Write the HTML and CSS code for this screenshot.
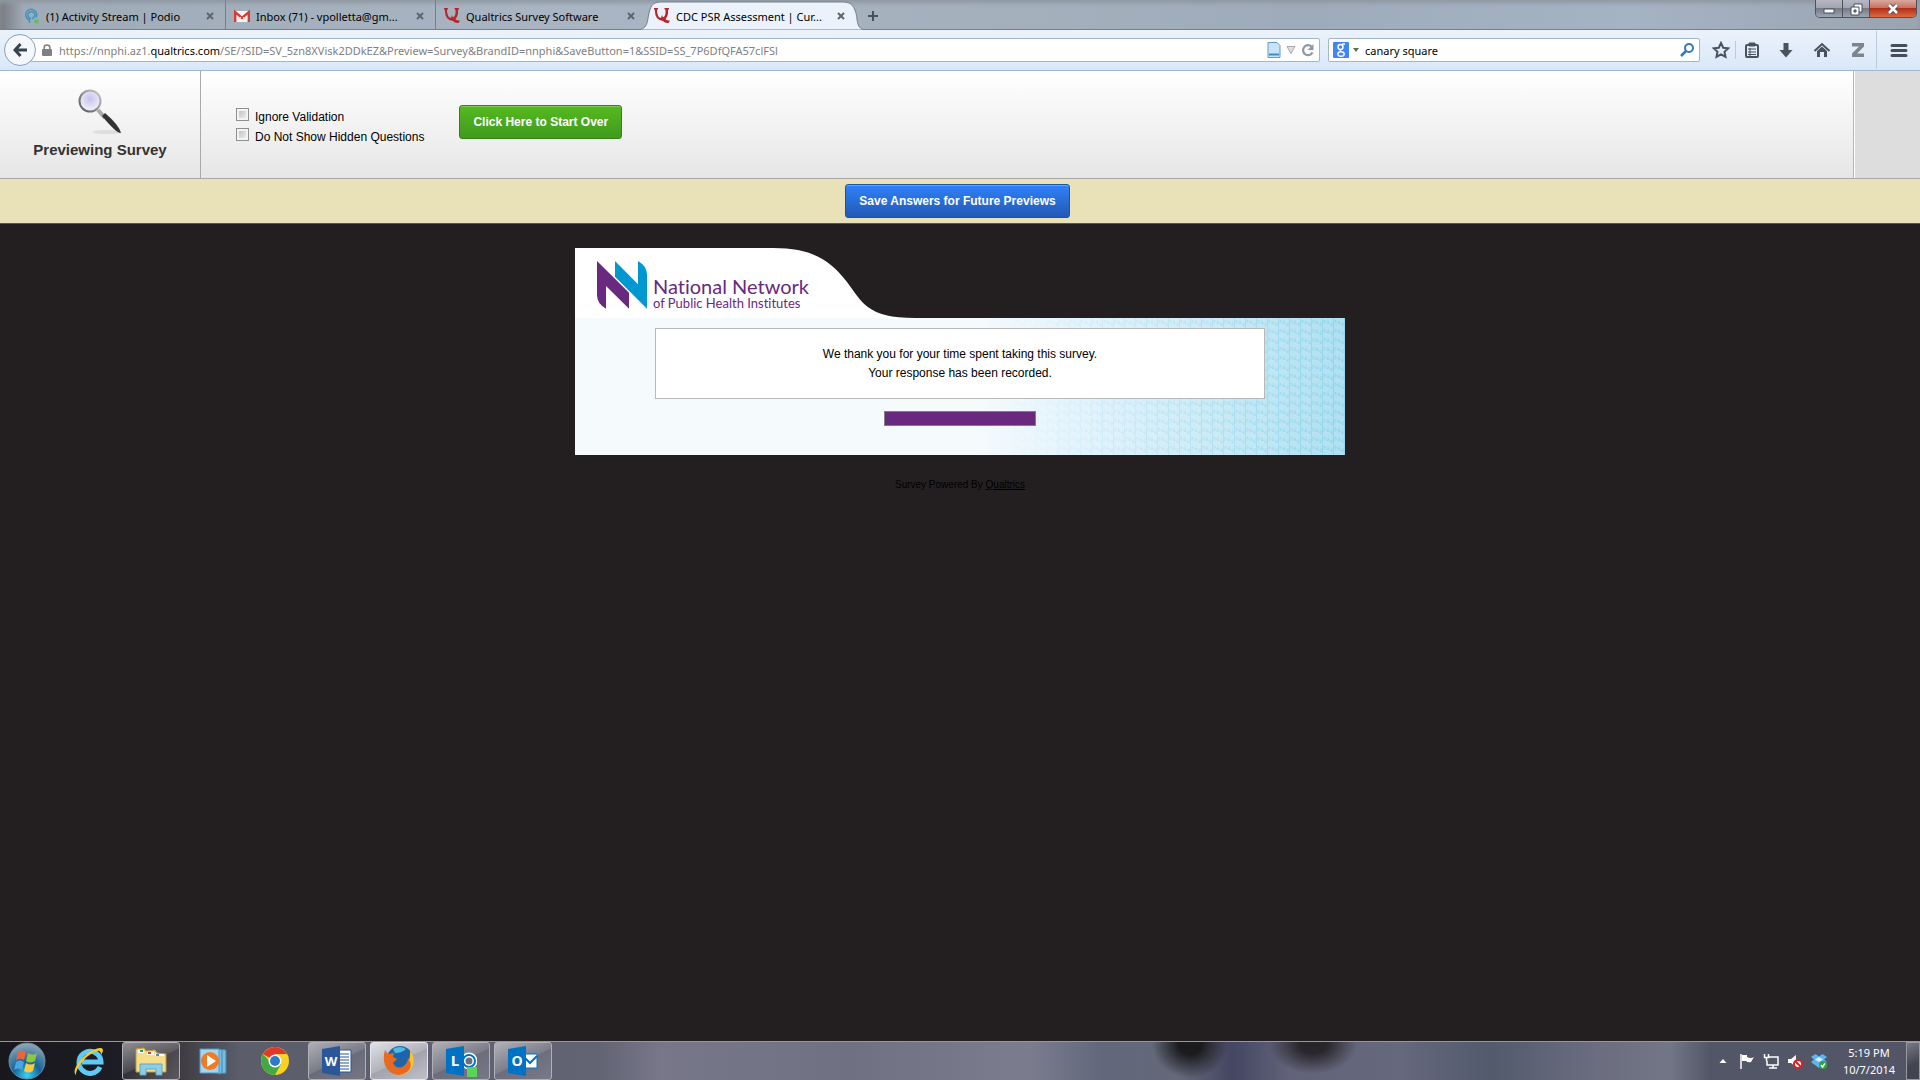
FILE: index.html
```html
<!DOCTYPE html>
<html lang="en">
<head>
    <meta charset="UTF-8">
    <meta name="viewport" content="width=device-width, initial-scale=1.0">
    <title>CDC PSR Assessment</title>
    <link rel="stylesheet" href="styles.css">
</head>
<body>
    <!-- Tab strip -->
    <header class="tab-strip">
        <nav class="tabs">
            <div class="tab">
                <svg class="icon" viewBox="0 0 16 16"><path d="M5.500 15V12A5.500 5.500 0 1 1 12 9.500M7 10.500A3.500 3.500 0 1 1 10.500 8.500L8 11" fill="none" stroke="#3f93bd" stroke-width="1.500"/><circle cx="12.500" cy="13.500" r="2.300" fill="#55c84e"/></svg>
                <a href="#">(1) Activity Stream | Podio</a>
                <button class="tab-close" aria-label="Close tab"><svg viewBox="0 0 8 8"><path d="M1 1l6 6M7 1L1 7"/></svg></button>
            </div>
            <div class="tab">
                <svg class="icon" viewBox="0 0 16 16"><path d="M0 3h16v11H0z" fill="#f6f3f3"/><path d="M1.200 14V4.200L8 10l6.800-5.800V14" fill="none" stroke="#d83a35" stroke-width="2.400"/><path d="M3 13l4-4M13 13L9 9" stroke="#ddd"/></svg>
                <a href="#">Inbox (71) - vpolletta@gm...</a>
                <button class="tab-close" aria-label="Close tab"><svg viewBox="0 0 8 8"><path d="M1 1l6 6M7 1L1 7"/></svg></button>
            </div>
            <div class="tab">
                <svg class="icon" viewBox="0 0 16 16"><path d="M0 0H4V1L3 2Q3 9 7 10L8 7L9 9.500Q12 8 11.500 2L10.500 1V0H15V1L14 2Q14.500 8 11.500 11Q13 13 16 12.500L14.500 15Q11 15.500 9 13Q1 12.500 .8 2L0 1z" fill="#b3262b"/></svg>
                <a href="#">Qualtrics Survey Software</a>
                <button class="tab-close" aria-label="Close tab"><svg viewBox="0 0 8 8"><path d="M1 1l6 6M7 1L1 7"/></svg></button>
            </div>
            <div class="tab tab-active">
                <svg class="tab-shape" viewBox="0 0 232 30" preserveAspectRatio="none"><path d="M0 30C12 30 11 22 13 13C15 4 18 2 26 2H206C214 2 217 4 220 13C222 22 220 30 232 30z" fill="#ebf2fb" stroke="#73808d"/></svg>
                <svg class="icon" viewBox="0 0 16 16"><path d="M0 0H4V1L3 2Q3 9 7 10L8 7L9 9.500Q12 8 11.500 2L10.500 1V0H15V1L14 2Q14.500 8 11.500 11Q13 13 16 12.500L14.500 15Q11 15.500 9 13Q1 12.500 .8 2L0 1z" fill="#b3262b"/></svg>
                <a href="#">CDC PSR Assessment | Cur...</a>
                <button class="tab-close" aria-label="Close tab"><svg viewBox="0 0 8 8"><path d="M1 1l6 6M7 1L1 7"/></svg></button>
            </div>
            <button class="new-tab" aria-label="New tab"><svg viewBox="0 0 10 10"><path d="M5 0v10M0 5h10" stroke="#45525e" stroke-width="2"/></svg></button>
        </nav>
        <div class="window-controls">
            <button aria-label="Minimize"><svg viewBox="0 0 16 14"><rect x="3" y="7" width="10" height="4" fill="#fff" stroke="#4a4f5c"/></svg></button>
            <button aria-label="Restore"><svg viewBox="0 0 16 14"><path d="M6 2h8v8H6z" fill="#fff" stroke="#4a4f5c"/><path d="M3 5h8v8H3z" fill="#fff" stroke="#4a4f5c"/><path d="M6 8h2v2H6z" fill="#888" stroke="#4a4f5c"/></svg></button>
            <button class="close-window" aria-label="Close"><svg viewBox="0 0 16 14"><path d="M4 3l8 8M12 3l-8 8" stroke="#4a4f5c" stroke-width="4.500"/><path d="M4 3l8 8M12 3l-8 8" stroke="#fff" stroke-width="2.600"/></svg></button>
        </div>
    </header>

    <!-- Address bar -->
    <div class="toolbar">
        <button class="back" aria-label="Back"><svg viewBox="0 0 14 14"><path d="M7.500 1L2 7l5.500 6M2.500 7H14" fill="none" stroke="#39444f" stroke-width="3"/></svg></button>
        <div class="address">
            <svg class="lock" viewBox="0 0 10 12"><path d="M2.200 6V3.500a2.800 2.500 0 0 1 5.600 0V6" fill="none" stroke="#808080" stroke-width="1.600"/><rect y="5" width="10" height="7" rx="1" fill="#808080"/></svg>
            <span class="url">https://nnphi.az1.<b>qualtrics.com</b>/SE/?SID=SV_5zn8XVisk2DDkEZ&amp;Preview=Survey&amp;BrandID=nnphi&amp;SaveButton=1&amp;SSID=SS_7P6DfQFA57clFSl</span>
            <svg class="icon" viewBox="0 0 16 16"><path d="M2 .5h9l3 3v12H2z" fill="#c9e4f8" stroke="#5f9ac8"/><path d="M3 12.500h10" stroke="#3a8ccb" stroke-width="2"/></svg>
            <svg class="small" viewBox="0 0 10 10"><path d="M1 1.500h8L5 8.500z" fill="#ddd" stroke="#aaa"/></svg>
            <svg class="icon" viewBox="0 0 16 16"><path d="M12.500 10.500A5 5 0 1 1 11.500 4.500" fill="none" stroke="#8c99a6" stroke-width="2.200"/><path d="M13.500 2v6h-6z" fill="#8c99a6"/></svg>
        </div>
        <form class="search">
            <svg class="icon" viewBox="0 0 16 16"><rect width="16" height="16" rx="1" fill="#4285f4"/><circle cx="7.500" cy="5" r="2.500" fill="none" stroke="#fff" stroke-width="1.500"/><path d="M9 2h3M8 7.500Q6 9 8.500 9.700" fill="none" stroke="#fff" stroke-width="1.300"/><ellipse cx="8" cy="12" rx="3.200" ry="2.200" fill="none" stroke="#fff" stroke-width="1.400"/></svg>
            <svg class="arrow" viewBox="0 0 6 4"><path d="M0 0h6L3 4z" fill="#666"/></svg>
            <input type="text" value="canary square" aria-label="Search">
            <button type="button" aria-label="Go"><svg class="icon" viewBox="0 0 16 16"><circle cx="10" cy="6" r="4" fill="none" stroke="#337ab5" stroke-width="2"/><path d="M7 9l-5 5" stroke="#337ab5" stroke-width="2.500"/></svg></button>
        </form>
        <div class="tools">
            <button aria-label="Bookmark"><svg viewBox="0 0 18 18"><path d="M9 2l2.200 4.700 5.100.6-3.800 3.500 1 5.100L9 13.400l-4.500 2.500 1-5.100L1.700 7.300l5.100-.6z" fill="none" stroke="#49535e" stroke-width="2"/></svg></button>
            <button class="split" aria-label="Bookmarks list"><svg viewBox="0 0 18 18"><rect x="3" y="4" width="12" height="12" rx="1" fill="none" stroke="#49535e" stroke-width="2"/><path d="M6 2h6v3H6zM5 8h8M5 11h8M5 13.500h8M7 7v8" fill="#49535e" stroke="#49535e"/></svg></button>
            <button aria-label="Downloads"><svg viewBox="0 0 18 18"><path d="M6.500 2h5v7h4L9 16.500 2.500 9h4z" fill="#49535e"/></svg></button>
            <button aria-label="Home"><svg viewBox="0 0 18 18"><path d="M1.500 10L9 3l7.500 7" fill="none" stroke="#49535e" stroke-width="2"/><path d="M4 10l5-4.500L14 10v6h-3v-5H7v5H4z" fill="#49535e"/></svg></button>
            <button aria-label="Zotero"><svg viewBox="0 0 18 18"><path d="M3 2h12v3.500L8 12.500h7V16H3v-3.500L10 5.500H3z" fill="#7c858d"/></svg></button>
            <button class="split menu" aria-label="Menu"><svg viewBox="0 0 18 18"><path d="M2 4.500h14M2 9.500h14M2 14.500h14" stroke="#454f59" stroke-width="3" stroke-linecap="round"/></svg></button>
        </div>
    </div>

    <!-- Preview options -->
    <section class="preview">
        <div class="preview-title">
            <svg viewBox="0 0 44 46">
                <defs>
                    <radialGradient id="lens" cx="50%" cy="40%" r="60%"><stop offset="0" stop-color="#c6c2ec"/><stop offset="1" stop-color="#f4f3fd"/></radialGradient>
                    <linearGradient id="rim" x1="1" y1="0" x2="0" y2="1"><stop offset="0" stop-color="#ccc"/><stop offset="1" stop-color="#555"/></linearGradient>
                </defs>
                <ellipse cx="29" cy="43" rx="14" ry="2" fill="#ddd"/>
                <path d="M20 21l7 8" stroke="#aaa" stroke-width="4"/>
                <path d="M24 27l3-3Q41 36 43 44Q39 45 24 27z" fill="#333"/>
                <circle cx="12" cy="12" r="10.500" fill="url(#lens)" stroke="url(#rim)" stroke-width="2"/>
            </svg>
            <h1>Previewing Survey</h1>
        </div>
        <div class="preview-options">
            <div class="checks">
                <label><input type="checkbox">Ignore Validation</label>
                <label><input type="checkbox">Do Not Show Hidden Questions</label>
            </div>
            <button class="btn btn-green">Click Here to Start Over</button>
        </div>
        <div class="preview-side"></div>
    </section>
    <div class="save-bar">
        <button class="btn btn-blue">Save Answers for Future Previews</button>
    </div>

    <!-- Survey -->
    <main>
        <div class="survey">
            <div class="survey-header">
                <svg class="curve" viewBox="0 0 340 70"><path d="M0 0H198C240 0 256 14 272 34C287 54 292 70 340 70H0z" fill="#fff"/></svg>
                <div class="brand">
                    <svg viewBox="0 0 150 144"><path d="M0 0L96 95V143L27 75V143Q0 128 0 102z" fill="#68297f"/><path d="M54 0L123 70V0Q150 16 150 40V143L54 47z" fill="#0098d1"/></svg>
                    <p><span class="brand-name">National Network</span><span class="brand-sub">of Public Health Institutes</span></p>
                </div>
            </div>
            <div class="survey-body">
                <svg class="weave" aria-hidden="true">
                    <defs><pattern id="nn" width="11" height="9" patternUnits="userSpaceOnUse"><path d="M1 6V2l4 4V2M5 4l4 4V4M10.500 0v9" fill="none" stroke="#6cc6e6" stroke-opacity=".4"/></pattern></defs>
                    <rect width="100%" height="100%" fill="url(#nn)"/>
                </svg>
                <div class="message">We thank you for your time spent taking this survey.<br>Your response has been recorded.</div>
                <div class="progress" role="progressbar" aria-label="Survey completion" aria-valuenow="100"></div>
            </div>
        </div>
        <p class="powered">Survey Powered By <a href="#">Qualtrics</a></p>
    </main>

    <!-- Taskbar -->
    <footer class="taskbar">
        <button class="start" aria-label="Start"><svg viewBox="0 0 38 38">
            <defs><radialGradient id="orb" cx="50%" cy="90%" r="85%"><stop offset="0" stop-color="#33d5ff"/><stop offset=".45" stop-color="#15639a"/><stop offset="1" stop-color="#8aa3b3"/></radialGradient></defs>
            <circle cx="19" cy="19" r="18" fill="url(#orb)" stroke="#6d8ba0"/>
            <path d="M10 10q4-3 8 0l-2 8q-4-3-8 0z" fill="#ee6338"/><path d="M20 11q5 3 9 0l-2 8q-5 3-9 0z" fill="#8dc63f"/><path d="M8 20q4-3 8 0l-2 8q-4-3-8 0z" fill="#4aa5e0"/><path d="M18 21q4 3 9 0l-2 8q-5 3-9 0z" fill="#fdc83b"/></svg></button>
        <button class="task" aria-label="Internet Explorer"><svg viewBox="0 0 32 32"><path d="M27 22A11 11 0 1 1 28 17H9" fill="none" stroke="#5dcbf5" stroke-width="5"/><path d="M3 30C-4 24 17 2 28 3Q32 4 28 10Q28 5 24 6C14 9 3 22 3 30z" fill="#f9c930"/></svg></button>
        <button class="task task-open" aria-label="Explorer"><svg viewBox="0 0 32 32"><path d="M1 4l8-1 2 3 9-1 2 3 9 1v18H1z" fill="#f4dd8b" stroke="#bd9b45"/><path d="M3 5h6v3H3zM12 7h7v3h-7zM20 9h9v2h-9z" fill="#fff"/><path d="M5 5h3v2H5z" fill="#27a737"/><path d="M13 7h3v2h-3z" fill="#d43d32"/><path d="M21 9h3v2h-3z" fill="#3595de"/><path d="M5 30V19h22v11h-6v-6H11v6z" fill="#8fcde5" stroke="#5ba9c8"/></svg></button>
        <button class="task" aria-label="Media Player"><svg viewBox="0 0 32 32"><path d="M21 4l8 1v23l-8 1z" fill="#7cbde2" stroke="#3989b7"/><path d="M25 4v24" stroke="#3989b7"/><path d="M3 4h19v24H3z" fill="#a6d3ed" stroke="#4a9bc9"/><circle cx="13" cy="16" r="9" fill="#f27a22"/><path d="M10 10l9 6-9 6z" fill="#fff"/></svg></button>
        <button class="task" aria-label="Chrome"><svg viewBox="0 0 32 32"><circle cx="16" cy="16" r="14" fill="#fbd027"/><path d="M16 16L3.900 9A14 14 0 0 1 28.100 9H16z" fill="#e0382d"/><path d="M3.900 9A14 14 0 0 0 16 30l6-11-6 3z" fill="#43a846"/><circle cx="16" cy="16" r="6.500" fill="#fff"/><circle cx="16" cy="16" r="5" fill="#2e79cb"/></svg></button>
        <button class="task task-open" aria-label="Word"><svg viewBox="0 0 32 32"><path d="M17 5h13v22H17z" fill="#fff" stroke="#2b579a"/><path d="M19 9h9M19 12h9M19 15h9M19 18h9M19 21h9M19 24h9" stroke="#2b579a"/><path d="M1 4l18-3v30L1 28z" fill="#2b579a"/><text x="10" y="21" text-anchor="middle" font-family="Open Sans, sans-serif" font-weight="bold" font-size="13" fill="#fff">W</text></svg></button>
        <button class="task task-open task-active" aria-label="Firefox"><svg viewBox="0 0 32 32"><circle cx="17" cy="14" r="13" fill="#1e64a8"/><path d="M10 4Q17 0 23 4Q19 8 12 8z" fill="#52b8e4"/><path d="M27 5Q34 15 28 24Q22 32 12 29L20 24Q28 18 27 5z" fill="#fbc52c"/><path d="M2 5l3 4 6-1-1 4 4 2-4 4q3 6 9 4 6-3 6-9Q31 21 24 27Q16 33 7 27Q-2 19 2 5z" fill="#e86a20"/></svg></button>
        <button class="task task-open" aria-label="Lync"><svg viewBox="0 0 32 32"><circle cx="24" cy="16" r="6" fill="none" stroke="#fff" stroke-width="5"/><circle cx="24" cy="16" r="6" fill="none" stroke="#0072c6" stroke-width="2"/><path d="M1 4l18-3v30L1 28z" fill="#0072c6"/><text x="10" y="21" text-anchor="middle" font-family="Open Sans, sans-serif" font-weight="bold" font-size="15" fill="#fff">L</text><path d="M22 22h10v10H22z" fill="#5bd35b"/></svg></button>
        <button class="task task-open" aria-label="Outlook"><svg viewBox="0 0 32 32"><path d="M17 9h13v14H17z" fill="#fff" stroke="#0072c6"/><path d="M18 13l5 5 7-7" fill="none" stroke="#0072c6" stroke-width="2"/><path d="M1 4l18-3v30L1 28z" fill="#0072c6"/><text x="10" y="21" text-anchor="middle" font-family="Open Sans, sans-serif" font-weight="bold" font-size="14" fill="#fff">O</text></svg></button>

        <div class="tray">
            <svg viewBox="0 0 16 16"><path d="M4.500 10L8 6l3.500 4z" fill="#fff"/></svg>
            <svg viewBox="0 0 16 16"><path d="M2 1v15" stroke="#fff" stroke-width="1.500"/><path d="M3 2h5v2q4 2 7 0l-3 5q-3 1-5-1H3z" fill="#fff"/></svg>
            <svg viewBox="0 0 16 16"><path d="M6 4h9v8H4V8M6 15h8M10 12v3M1.500 1v3.500h4V1M3.500 4v4" fill="none" stroke="#fff" stroke-width="1.500"/></svg>
            <svg viewBox="0 0 16 16"><path d="M1 6h3l5-4v12l-5-4H1z" fill="#fff"/><circle cx="11" cy="11" r="4" fill="#fff" stroke="#df1f1f" stroke-width="2"/><path d="M8 8l6 6" stroke="#df1f1f" stroke-width="2"/></svg>
            <svg viewBox="0 0 16 16"><path d="M4.500 1L8 3.500 11.500 1 16 4l-3 2.500L16 9l-4 3-4 3-4-3-4-3 3-2.500L0 4z" fill="#5db7ee"/><path d="M8 4l4 2.500L8 9 4 6.500z" fill="#d7effd"/><circle cx="12" cy="12" r="4" fill="#2ca345"/><path d="M10 12l1.500 2L14 10.500" fill="none" stroke="#fff" stroke-width="1.500"/></svg>
        </div>
        <div class="clock"><span>5:19 PM</span><span>10/7/2014</span></div>
        <button class="show-desktop" aria-label="Show desktop"></button>
    </footer>
</body>
</html>
```

FILE: styles.css
```css
* {
    box-sizing: border-box;
}
body {
    margin: 0;
    min-height: 100vh;
    display: flex;
    flex-direction: column;
    background-color: #231f20;
    font-family: "Liberation Sans", Arial, sans-serif;
    font-size: 12px;
    color: #000;
}
button {
    padding: 0;
    border: none;
    background: none;
    font-family: inherit;
}
svg {
    display: block;
    flex: none;
}
.icon {
    width: 16px;
    height: 16px;
}

/* Tab strip */
.tab-strip {
    display: flex;
    justify-content: space-between;
    height: 30px;
    background: linear-gradient(90deg, #77787d 0, #a0abb8 24px, #a9b5c2 30%, #a3afbb 55%, #9eabba 68%, #a5b3c4 85%, #9ba4b0 100%);
    box-shadow: inset 0 -1px #73808d, inset 0 3px 4px #8f98a2;
    font-family: "Noto Sans", sans-serif;
    font-size: 11px;
}
.tabs {
    display: flex;
    padding-left: 16px;
}
.tab {
    position: relative;
    display: flex;
    align-items: center;
    gap: 6px;
    width: 210px;
    padding: 2px 11px 0 8px;
    border-right: 1px solid #73808d;
}
.tab a {
    flex: 1;
    color: #000;
    text-decoration: none;
    white-space: nowrap;
}
.tab > * {
    position: relative;
}
.tab:nth-child(3) {
    border-right: none;
}
.tab-close svg {
    width: 8px;
    height: 8px;
    stroke: #5b6671;
    stroke-width: 2;
}
.tab .tab-shape {
    position: absolute;
    left: -10px;
    top: 0;
    width: 232px;
    height: 30px;
}
.tab-active {
    border-right: none;
}
.new-tab {
    padding: 2px 12px 0;
}
.new-tab svg {
    width: 10px;
    height: 10px;
}
.window-controls {
    display: flex;
    width: 102px;
    height: 18px;
    margin-right: 3px;
    border: 1px solid #4d525c;
    border-top: none;
    border-radius: 0 0 5px 5px;
    overflow: hidden;
}
.window-controls button {
    flex: 1;
    display: flex;
    justify-content: center;
    align-items: center;
    border-right: 1px solid #4d525c;
    background: linear-gradient(#b5b8c2 0, #a1a4af 50%, #777b89 50%, #9da4b2 100%);
}
.window-controls .close-window {
    flex: none;
    width: 46px;
    border-right: none;
    background: linear-gradient(#d8a99e 0, #c66d5d 50%, #b52f18 50%, #d96b43 100%);
}
.window-controls svg {
    width: 16px;
    height: 14px;
}

/* Address bar */
.toolbar {
    display: flex;
    align-items: center;
    height: 41px;
    padding-left: 4px;
    background: linear-gradient(#ebf2fb, #d9e8f8);
    border-bottom: 1px solid #9fb9d4;
    font-family: "Noto Sans", sans-serif;
    font-size: 11px;
}
.back {
    position: relative;
    display: flex;
    align-items: center;
    justify-content: center;
    width: 32px;
    height: 32px;
    border: 1px solid #8ba0b6;
    border-radius: 50%;
    background: #f4f8fd;
}
.back svg {
    width: 14px;
    height: 14px;
}
.address, .search {
    display: flex;
    align-items: center;
    height: 24px;
    border: 1px solid #a3b7cb;
    border-radius: 2px;
    background: #fff;
}
.address {
    flex: 1;
    min-width: 0;
    gap: 4px;
    margin-left: -6px;
    padding: 0 3px 0 11px;
}
.lock {
    width: 10px;
    height: 12px;
}
.url {
    flex: 1;
    overflow: hidden;
    margin-left: 3px;
    color: #808080;
    white-space: nowrap;
}
.url b {
    font-weight: 400;
    color: #000;
}
.small {
    width: 10px;
    height: 10px;
}
.search {
    width: 372px;
    margin: 0 7px 0 8px;
    padding: 0 4px;
}
.arrow {
    width: 6px;
    height: 4px;
    margin: 0 6px 0 4px;
}
.search input {
    flex: 1;
    min-width: 0;
    padding: 0;
    border: none;
    background: none;
    font-family: inherit;
    font-size: 11px;
}
.tools {
    display: flex;
    align-items: center;
}
.tools button {
    display: flex;
    justify-content: center;
    width: 36px;
}
.tools button:first-child {
    width: 28px;
}
.tools .split {
    width: 33px;
    border-left: 1px solid #b9cbdd;
}
.tools .menu {
    width: 44px;
    padding: 10px 0;
}
.tools svg {
    width: 18px;
    height: 18px;
}

/* Preview options */
.preview {
    display: flex;
    height: 108px;
    border-bottom: 1px solid #a8a8a8;
    background: linear-gradient(#fff, #e6e6e6);
}
.preview-title {
    display: flex;
    flex-direction: column;
    align-items: center;
    width: 201px;
    padding-top: 18px;
    border-right: 1px solid #aaa;
}
.preview-title svg {
    width: 44px;
    height: 46px;
}
h1 {
    margin: 6px 0 0;
    color: #333;
    font-size: 15px;
    line-height: 17px;
}
.preview-options {
    flex: 1;
    display: flex;
    align-items: flex-start;
    gap: 35px;
    padding: 34px 0 0 35px;
}
.checks label {
    display: flex;
    gap: 6px;
    height: 20px;
    padding-top: 3px;
    line-height: 18px;
}
.checks input {
    appearance: none;
    width: 13px;
    height: 13px;
    margin: 0;
    border: 1px solid #8e8f8f;
    background: linear-gradient(135deg, #b4b9c2, #f6f6f6);
    box-shadow: inset 0 0 0 2px #f4f4f4;
}
.checks input:checked {
    background: #4b6a94;
}
.btn {
    height: 34px;
    padding: 0 13px;
    border-radius: 3px;
    color: #fff;
    font-size: 12px;
    font-weight: bold;
}
.btn-green {
    border: 1px solid #35811a;
    background: linear-gradient(#56b91f, #3f9b1e);
    box-shadow: inset 0 1px #7ccb52;
}
.btn-blue {
    border: 1px solid #1d549f;
    background: linear-gradient(#2f82fb, #2358b4);
    box-shadow: inset 0 1px #62a4fe;
}
.preview-side {
    width: 67px;
    border-left: 1px solid #b4b4b4;
    background: #ddd;
    box-shadow: inset 1px 0 #fff;
}
.save-bar {
    height: 45px;
    padding: 5px 5px 0 0;
    border-bottom: 1px solid #57564d;
    background: #e9e2b8;
    text-align: center;
}

/* Survey */
main {
    flex: 1;
    padding: 24px 0;
}
.survey {
    max-width: 770px;
    margin: 0 auto;
}
.survey-header {
    position: relative;
    height: 70px;
}
.curve {
    position: absolute;
    left: 0;
    top: 0;
    width: 340px;
    height: 70px;
}
.brand {
    position: relative;
    display: flex;
    gap: 6px;
    padding: 13px 0 0 22px;
    color: #68297f;
    font-family: Lato, sans-serif;
    font-variant-ligatures: none;
}
.brand svg {
    width: 50px;
    height: 48px;
}
.brand p {
    display: flex;
    flex-direction: column;
    margin: 15px 0 0;
    white-space: nowrap;
}
.brand-name {
    font-size: 20px;
    line-height: 20px;
}
.brand-sub {
    font-size: 13px;
    line-height: 14px;
}
.survey-body {
    position: relative;
    padding: 10px 80px 29px;
    background: linear-gradient(90deg, #f5fafd 0, #f5fafd 52%, #e4f4fc 65%, #cdebf6 82%, #afe0f1 100%);
}
.weave {
    position: absolute;
    inset: 0;
    width: 100%;
    height: 100%;
    -webkit-mask-image: linear-gradient(90deg, transparent 55%, #000);
    mask-image: linear-gradient(90deg, transparent 55%, #000);
}
.message {
    position: relative;
    padding: 16px 16px 15px;
    border: 1px solid #b9b9b9;
    background: #fff;
    line-height: 19px;
    text-align: center;
}
.progress {
    position: relative;
    width: 152px;
    height: 15px;
    margin: 12px auto 0;
    border: 1px solid #808080;
    background: #68297f;
}
.powered {
    margin: 24px 0 0;
    font-size: 10px;
    line-height: 12px;
    text-align: center;
}
.powered a {
    color: #000;
}

/* Taskbar */
.taskbar {
    display: flex;
    align-items: center;
    gap: 4px;
    height: 39px;
    padding-left: 8px;
    border-top: 1px solid #99979c;
    background:
        radial-gradient(ellipse 38px 34px at 1190px 2px, #1b1b1d 30%, transparent),
        radial-gradient(ellipse 44px 30px at 1313px 2px, #28262a 30%, transparent),
        linear-gradient(90deg, #17171c 0, #1d1d25 120px, #3f3b42 180px, #5b5d6b 240px, #626373 600px, #777789 660px, #6f7183 850px, #7b7c8e 1030px, #62687b 1100px, #646879 1180px, #444662 1232px, #62637a 1290px, #66687c 1400px, #525a6c 1490px, #6c6e80 1600px, #737687 1670px, #525768 1710px, #535565 100%);
}
.start, .start svg {
    width: 38px;
    height: 38px;
}
.task {
    display: flex;
    align-items: center;
    justify-content: center;
    width: 58px;
    height: 38px;
    border: 1px solid transparent;
    border-radius: 3px;
}
.start + .task {
    margin-left: 10px;
}
.task svg {
    width: 32px;
    height: 32px;
}
.task-open {
    border-color: #b0b0b6;
    background: linear-gradient(155deg, rgba(255, 255, 255, .5), rgba(255, 255, 255, .18) 50%, rgba(255, 255, 255, .08) 52%, rgba(255, 255, 255, .15));
}
.task-active {
    border-color: #e5e5ea;
    background: linear-gradient(155deg, #e0e0e6, #b1b2bb 50%, #a2a3ae 52%, #bfc0c7);
}
.tray {
    display: flex;
    gap: 8px;
    margin: 0 5px 0 auto;
}
.tray svg {
    width: 16px;
    height: 16px;
}
.clock {
    display: flex;
    flex-direction: column;
    width: 66px;
    color: #fff;
    font-family: "Noto Sans", sans-serif;
    font-size: 11px;
    line-height: 17px;
    text-align: center;
}
.show-desktop {
    width: 14px;
    height: 38px;
    border: 1px solid #9999a3;
    background: linear-gradient(155deg, #777985, #42444f 60%);
}
```
